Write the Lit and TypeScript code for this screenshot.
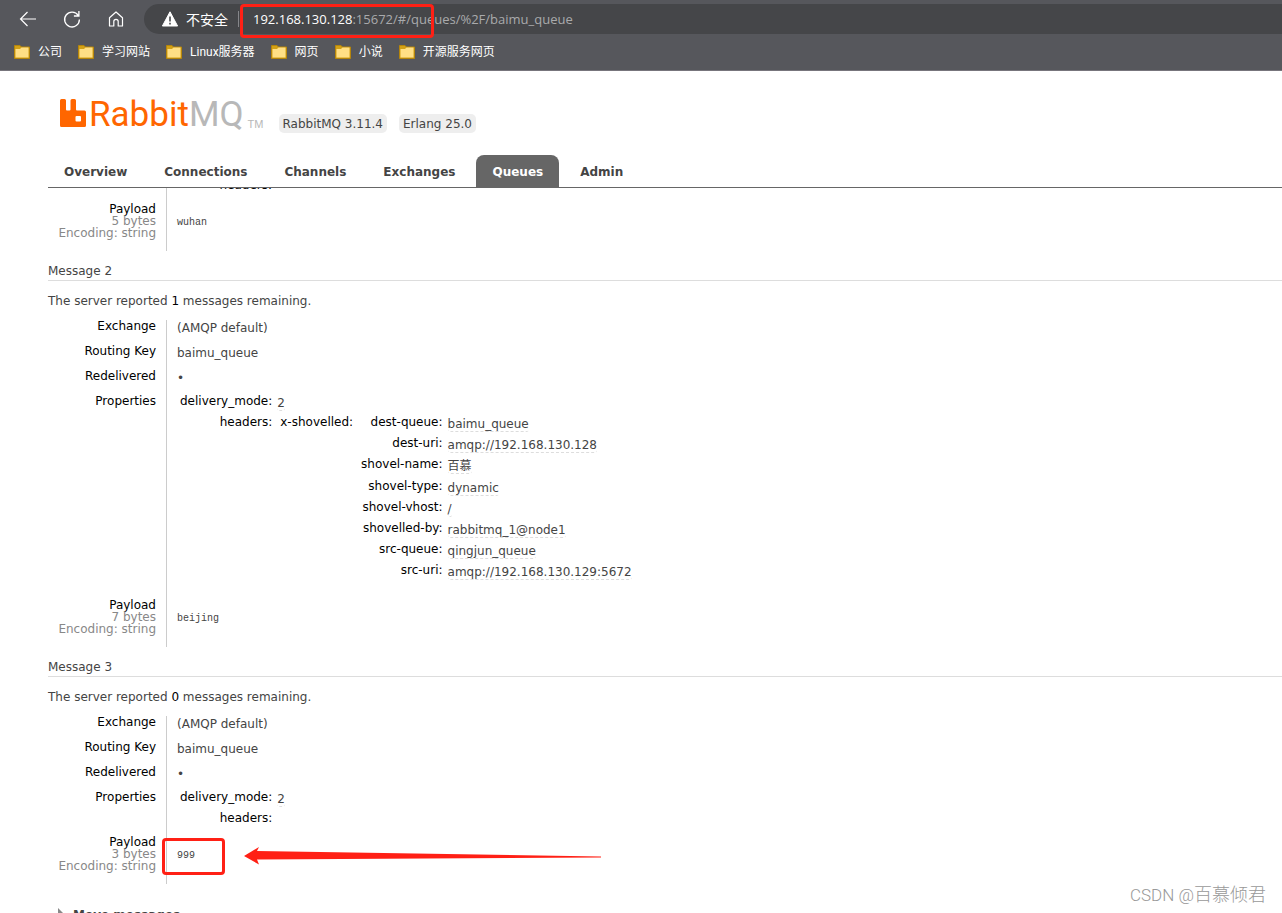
import { LitElement, html, css, svg, nothing } from "lit";
import { customElement, property } from "lit/decorators.js";

interface Message {
  title?: string;
  remaining?: number;
  shovelled?: [string, string][];
  bytes: number;
  payload: string;
}

const BOOKMARKS = ["公司", "学习网站", "Linux服务器", "网页", "小说", "开源服务网页"];
const TABS = ["Overview", "Connections", "Channels", "Exchanges", "Queues", "Admin"];

const MESSAGES: Message[] = [
  { bytes: 5, payload: "wuhan" },
  {
    title: "Message 2",
    remaining: 1,
    shovelled: [
      ["dest-queue", "baimu_queue"],
      ["dest-uri", "amqp://192.168.130.128"],
      ["shovel-name", "百慕"],
      ["shovel-type", "dynamic"],
      ["shovel-vhost", "/"],
      ["shovelled-by", "rabbitmq_1@node1"],
      ["src-queue", "qingjun_queue"],
      ["src-uri", "amqp://192.168.130.129:5672"],
    ],
    bytes: 7,
    payload: "beijing",
  },
  { title: "Message 3", remaining: 0, bytes: 3, payload: "999" },
];

@customElement("browser-bar")
export class BrowserBar extends LitElement {
  static styles = css`
    :host {
      display: block;
      height: 70px;
      background: #56575c;
      border-bottom: 1px solid #77757c;
      color: #fff;
      font-family: "Open Sans", "Noto Sans CJK SC", sans-serif;
      overflow: hidden;
    }
    .tools {
      display: flex;
      align-items: center;
      padding: 4px 0 0 16px;
    }
    .tool {
      width: 24px;
      height: 24px;
      margin-right: 20px;
      padding: 0;
      border: 0;
      background: none;
      color: #fff;
    }
    .tool svg,
    .folder {
      display: block;
    }
    .address {
      display: flex;
      flex: 1;
      align-items: center;
      height: 30px;
      margin-left: -4px;
      padding-left: 18px;
      border-radius: 15px 0 0 15px;
      background: #454649;
      font-size: 13px;
      white-space: nowrap;
    }
    .unsafe {
      margin: 0 10px 0 8px;
      font-size: 14px;
    }
    .divider {
      width: 1px;
      height: 16px;
      margin-right: 14px;
      background: #85868a;
    }
    .rest {
      color: #a9aaac;
    }
    .bookmarks {
      display: flex;
      gap: 16px;
      padding: 8px 14px 0;
      font: 12px/20px Roboto, "Noto Sans CJK SC", sans-serif;
    }
    .bookmark {
      display: flex;
      align-items: center;
      gap: 8px;
      color: #fff;
      text-decoration: none;
      white-space: nowrap;
    }
  `;

  render() {
    return html`
      <div class="tools">
        <button class="tool" aria-label="Back">
          <svg width="24" height="24" viewBox="0 0 24 24" fill="none" stroke="currentColor" stroke-width="1.2">
            <path d="M20 12H4.500M11.500 5l-7 7 7 7" />
          </svg>
        </button>
        <button class="tool" aria-label="Refresh">
          <svg width="24" height="24" viewBox="0 0 24 24" fill="none" stroke="currentColor" stroke-width="1.3">
            <path d="M18.2 8.5A7.4 7.4 0 1 0 19.4 12.500M18.900 4v5h-5" />
          </svg>
        </button>
        <button class="tool" aria-label="Home">
          <svg width="24" height="24" viewBox="0 0 24 24" fill="none" stroke="currentColor" stroke-width="1.2" stroke-linejoin="round">
            <path d="M5.500 10.800L12 5l6.500 5.800v8.200h-4.300v-4.500a2.200 2.200 0 0 0-4.400 0v4.500H5.500z" />
          </svg>
        </button>
        <div class="address">
          <svg width="16" height="16" viewBox="0 0 16 16">
            <path d="M8 .8L15.600 15H.4z" fill="#fff" stroke="#fff" stroke-linejoin="round" />
            <path d="M8 5.500v5M8 11.800v1.700" stroke="#454649" stroke-width="1.600" />
          </svg>
          <span class="unsafe">不安全</span>
          <span class="divider"></span>
          <span>192.168.130.128</span><span class="rest">:15672/#/queues/%2F/baimu_queue</span>
        </div>
      </div>
      <nav class="bookmarks">
        ${BOOKMARKS.map(
          (name) => html`<a class="bookmark" href="#"
            ><svg class="folder" width="16" height="16" viewBox="0 0 16 16">
              <path d="M.5 1.500h5.500l1.500 1.500h8v11.500H.5z" fill="#d3a116" stroke="#b5850b" />
              <path d="M1.500 5h4.500l1.500-1.500h7v10h-13z" fill="#ffdf85" /></svg
            ><span>${name}</span></a
          >`
        )}
      </nav>
    `;
  }
}

@customElement("management-header")
export class ManagementHeader extends LitElement {
  static styles = css`
    :host {
      display: block;
      padding: 26px 0 0 48px;
    }
    .brand {
      display: flex;
      align-items: flex-end;
      height: 36px;
      padding-left: 12px;
    }
    .mark {
      display: block;
      margin-bottom: 5px;
    }
    .word {
      margin-left: 2px;
      color: #f60;
      font: 35px/36px Roboto, sans-serif;
    }
    .grey {
      color: #b8b8b8;
    }
    .tm {
      width: 16px;
      margin: 0 15px 3px 4px;
      color: #b8b8b8;
      font: 11px/12px "Liberation Sans", sans-serif;
    }
    .pill {
      margin-right: 12px;
      padding: 2px 4px 0;
      border-radius: 5px;
      background: #eee;
      line-height: 17px;
    }
    .tabs {
      display: flex;
      gap: 5px;
      margin-top: 22px;
      border-bottom: 1px solid #666;
    }
    .tab {
      padding: 2px 16px 0;
      border-radius: 8px 8px 0 0;
      color: #444;
      font-weight: bold;
      line-height: 30px;
      text-decoration: none;
    }
    .active {
      background: #666;
      color: #fff;
    }
  `;

  render() {
    return html`
      <div class="brand">
        <svg class="mark" width="27" height="29" viewBox="0 0 27 29">
          <path
            fill="#f60"
            fill-rule="evenodd"
            d="M1.500 0h3Q6 0 6 1.500V10.500q0 1 1 1h2.500q1 0 1-1V1.500Q10.500 0 12 0h2.500Q16 0 16 1.500V10.500q0 1 1 1h7.500q1.500 0 1.500 1.500v13.500q0 1.500-1.500 1.500h-23Q0 28 0 26.500V1.500Q0 0 1.500 0zM16.500 17q-1 0-1 1v3.500q0 1 1 1h3.500q1 0 1-1V18q0-1-1-1z"
          />
        </svg>
        <span class="word">Rabbit<span class="grey">MQ</span></span>
        <span class="tm">TM</span>
        <span class="pill">RabbitMQ 3.11.4</span>
        <span class="pill">Erlang 25.0</span>
      </div>
      <nav class="tabs">
        ${TABS.map((t) => html`<a class="tab ${t === "Queues" ? "active" : ""}" href="#">${t}</a>`)}
      </nav>
    `;
  }
}

@customElement("queue-message")
export class QueueMessage extends LitElement {
  @property({ attribute: false }) message!: Message;

  static styles = css`
    :host {
      display: block;
      line-height: 12px;
    }
    .title {
      margin: 0;
      padding: 14px 0 3px;
      border-bottom: 1px solid #ddd;
      font-size: 12px;
      font-weight: normal;
    }
    .remaining {
      margin: 0;
      padding: 14px 0 13px;
    }
    .strong,
    th {
      color: #000;
      font-weight: normal;
    }
    table {
      border-collapse: collapse;
    }
    th,
    td {
      padding: 0;
      text-align: right;
      vertical-align: top;
      white-space: nowrap;
    }
    td {
      text-align: left;
    }
    .facts > tbody > tr > th {
      min-width: 108px;
      padding: 0 10px 12px 0;
    }
    .facts > tbody > tr > td {
      padding: 2px 10px 11px;
      border-left: 1px solid #ccc;
    }
    .facts > tbody > tr > td.nested {
      padding: 0 10px 10px;
    }
    .props > tbody > tr > th {
      height: 14px;
      padding: 0 5px 0 3px;
    }
    .props > tbody > tr > th.wide {
      min-width: 92px;
    }
    .props > tbody > tr > td.value {
      height: 19px;
      padding-top: 2px;
    }
    .props > tbody > tr > td.cjk {
      height: 20px;
    }
    .props > tbody > tr > td.inner {
      padding-bottom: 2px;
    }
    .text {
      border-bottom: 1px dashed #ddd;
      border-radius: 3px;
    }
    .sub {
      color: #888;
    }
    .payload {
      margin: 0;
      padding-top: 12px;
      font: 10px/12px "Liberation Mono", monospace;
    }
  `;

  private value(text: string | number) {
    const cjk = /[\u4e00-\u9fff]/.test(String(text));
    return html`<td class="value ${cjk ? "cjk" : ""}"><span class="text">${text}</span></td>`;
  }

  render() {
    const m = this.message;
    const shovel = m.shovelled
      ? html`<table class="props"><tbody><tr>
          <th>x-shovelled:</th>
          <td class="inner"><table class="props"><tbody>
            ${m.shovelled.map(([k, v]) => html`<tr><th>${k}:</th>${this.value(v)}</tr>`)}
          </tbody></table></td>
        </tr></tbody></table>`
      : nothing;

    return html`
      ${m.title
        ? html`<h3 class="title">${m.title}</h3>
            <p class="remaining">The server reported <span class="strong">${m.remaining}</span> messages remaining.</p>`
        : nothing}
      <table class="facts"><tbody>
        ${m.title
          ? html`<tr><th>Exchange</th><td>(AMQP default)</td></tr>
              <tr><th>Routing Key</th><td>baimu_queue</td></tr>
              <tr><th>Redelivered</th><td>•</td></tr>`
          : nothing}
        <tr>
          <th>${m.title ? "Properties" : nothing}</th>
          <td class="nested"><table class="props"><tbody>
            ${m.title ? html`<tr><th>delivery_mode:</th>${this.value(2)}</tr>` : nothing}
            <tr><th class="wide">headers:</th><td class="inner">${shovel}</td></tr>
          </tbody></table></td>
        </tr>
        <tr>
          <th>Payload<div class="sub">${m.bytes} bytes</div><div class="sub">Encoding: string</div></th>
          <td><pre class="payload">${m.payload}</pre></td>
        </tr>
      </tbody></table>
    `;
  }
}

@customElement("app-root")
export class AppRoot extends LitElement {
  static styles = css`
    :host {
      position: relative;
      display: flex;
      flex-direction: column;
      height: 100vh;
      overflow: hidden;
      background: #fff;
      color: #444;
      font: 12px "DejaVu Sans", "Noto Sans CJK SC", sans-serif;
    }
    browser-bar,
    management-header {
      flex: none;
    }
    .viewport {
      flex: 1;
      min-height: 0;
      overflow: hidden;
      padding-left: 48px;
    }
    .scrolled {
      margin-top: -9px;
    }
    .section {
      display: flex;
      align-items: flex-start;
      gap: 9px;
      margin: 24px 0 0;
      padding-left: 10px;
      font-size: 12px;
      line-height: 14px;
    }
    .frame {
      position: absolute;
      box-sizing: border-box;
      border: 3px solid #ff2015;
      border-radius: 4px;
    }
    .frame-url {
      top: 4px;
      left: 240px;
      width: 194px;
      height: 34px;
    }
    .frame-payload {
      top: 838px;
      left: 162px;
      width: 63px;
      height: 37px;
    }
    .arrow {
      position: absolute;
      top: 846px;
      left: 244px;
    }
    .watermark {
      position: absolute;
      right: 16px;
      bottom: 6px;
      color: #999;
      font: 300 17px/24px Roboto, sans-serif;
    }
    .author {
      font: 300 18px/24px "Noto Sans CJK SC", sans-serif;
    }
  `;

  render() {
    return html`
      <browser-bar></browser-bar>
      <management-header></management-header>
      <main class="viewport">
        <div class="scrolled">
          ${MESSAGES.map((m) => html`<queue-message .message=${m}></queue-message>`)}
          <h2 class="section">
            <svg width="6" height="12" viewBox="0 0 6 12"><path d="M0 0l6 6-6 6z" fill="#888" /></svg>
            Move messages
          </h2>
        </div>
      </main>
      <div class="frame frame-url"></div>
      <div class="frame frame-payload"></div>
      <svg class="arrow" width="358" height="20" viewBox="0 0 358 20">
        ${svg`<path d="M0 10L15 1l-2 4L357 10.500v1L13 13.500l2 5z" fill="#ff2015" />`}
      </svg>
      <div class="watermark">CSDN @<span class="author">百慕倾君</span></div>
    `;
  }
}
